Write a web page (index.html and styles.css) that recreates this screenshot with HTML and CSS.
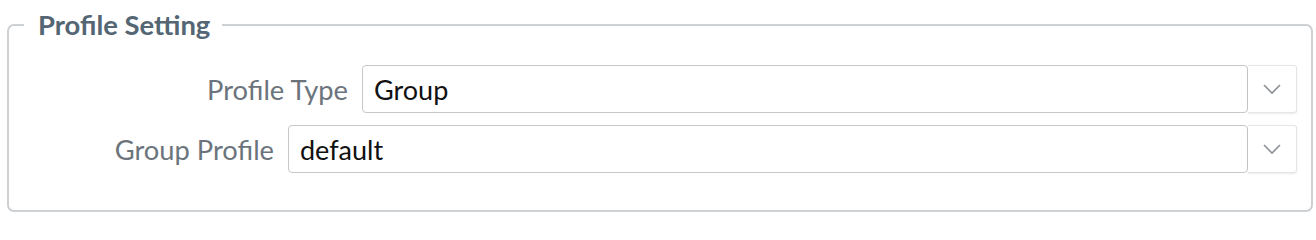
FILE: index.html
```html
<!DOCTYPE html>
<html>
<head>
<meta charset="utf-8">
<link rel="stylesheet" href="styles.css">
</head>
<body>
<fieldset class="panel">
  <legend class="panel-title">Profile Setting</legend>
  <div class="row">
    <label class="row-label">Profile Type</label>
    <div class="select select--type">
      <div class="select-value">Group</div>
      <div class="select-caret">
        <svg width="20" height="12" viewBox="0 0 20 12"><path d="M2 2 L10 10 L18 2" fill="none" stroke="#8a9096" stroke-width="1.6"/></svg>
      </div>
    </div>
  </div>
  <div class="row">
    <label class="row-label">Group Profile</label>
    <div class="select select--group">
      <div class="select-value">default</div>
      <div class="select-caret">
        <svg width="20" height="12" viewBox="0 0 20 12"><path d="M2 2 L10 10 L18 2" fill="none" stroke="#8a9096" stroke-width="1.6"/></svg>
      </div>
    </div>
  </div>
</fieldset>
</body>
</html>
```
FILE: styles.css
```css
html, body {
  margin: 0;
  padding: 0;
  background: #ffffff;
  font-family: Lato, "Noto Sans", sans-serif;
}
body {
  padding-top: 10px;
}
.panel {
  margin: 0 3px 0 7px;
  padding: 25px 14px 37px 15px;
  border: 2px solid #cdd1d4;
  border-radius: 7px;
  min-width: 0;
}
.panel-title {
  padding: 0 12px 0 14px;
  font-size: 27.4px;
  line-height: 30px;
  font-weight: 700;
  color: #546573;
}
.row {
  display: flex;
  justify-content: flex-end;
  align-items: center;
  gap: 14px;
}
.row + .row {
  margin-top: 12px;
}
.row-label {
  font-size: 27.3px;
  color: #6b747c;
  white-space: nowrap;
}
.select {
  display: flex;
  height: 48px;
}
.select--type {
  width: 935px;
}
.select--group {
  width: 1009px;
}
.select-value {
  flex: 1;
  display: flex;
  align-items: center;
  padding: 0 11px;
  border: 1px solid #c4c8cb;
  border-radius: 4px;
  font-size: 27px;
  color: #111;
}
.select-caret {
  width: 48px;
  display: flex;
  align-items: center;
  justify-content: center;
  border: 1px solid #e3e5e7;
  border-left: none;
  border-radius: 0 3px 3px 0;
  box-shadow: 0 1px 2px rgba(0,0,0,0.08);
}
```
